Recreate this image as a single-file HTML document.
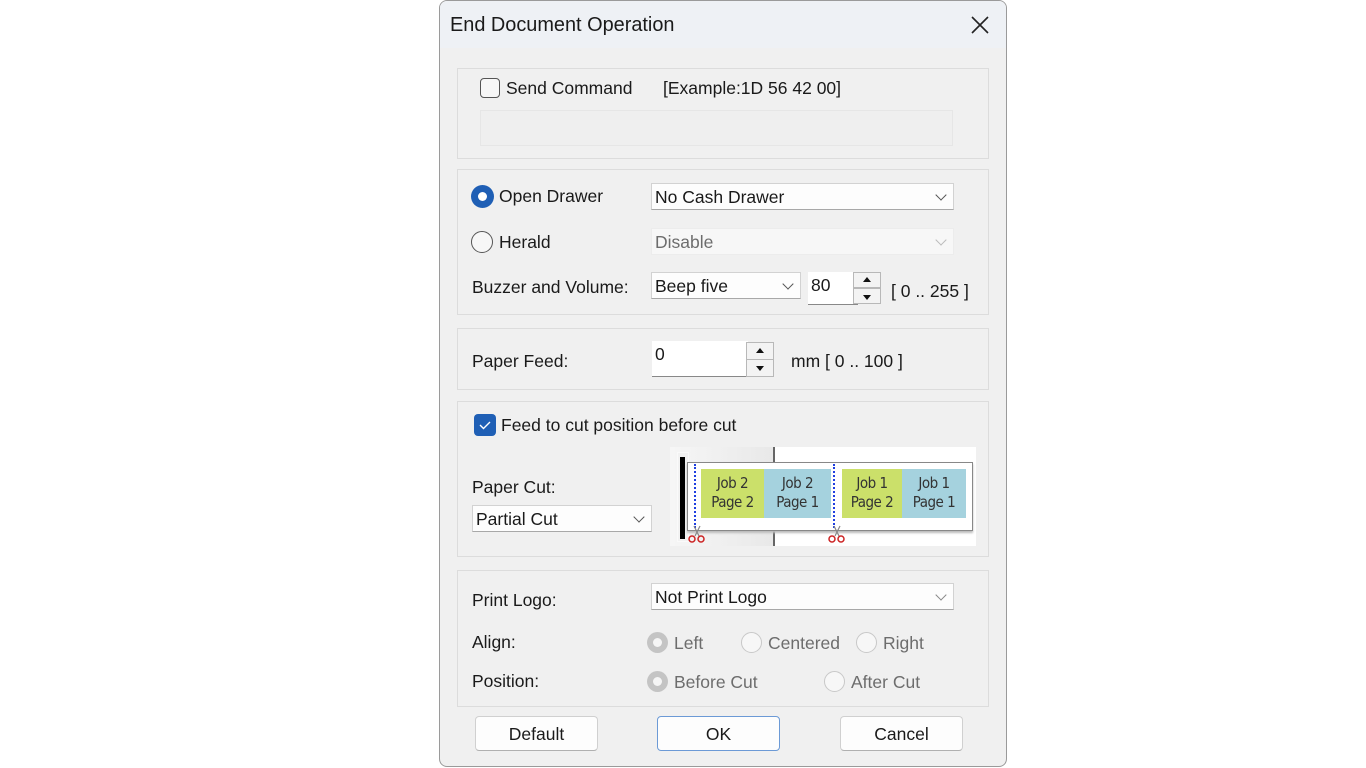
<!DOCTYPE html>
<html><head><meta charset="utf-8"><style>
*{box-sizing:border-box;margin:0;padding:0}
body{width:1366px;height:768px;background:#fff;position:relative;font-family:"Liberation Sans",Arial,sans-serif;font-size:17.5px;color:#1a1a1a;overflow:hidden}
.a{position:absolute}
.dlg{left:439px;top:0;width:568px;height:767px;background:#f0f0f0;border:1px solid #9a9a9a;border-radius:8px;overflow:hidden}
.title{left:0;top:0;width:566px;height:47px;background:#eef1f5}
.grp{position:absolute;border:1px solid #dcdcdc;background:#f0f0f0}
.cb{position:absolute;width:20px;height:20px;border:1px solid #555;border-radius:4px;background:#f7f7f7}
.rad{position:absolute;width:22px;height:22px;border-radius:50%;border:1px solid #555;background:#f7f7f7}
.sel{position:absolute;background:#fdfdfd;border:1px solid #d2d2d2;border-bottom-color:#a8a8a8;height:27px;padding:3px 0 0 3px}
.chev{position:absolute;right:8px;top:7px;width:8px;height:8px;border-right:1px solid #555;border-bottom:1px solid #555;transform:rotate(45deg)}
.spin{position:absolute;background:#fff;border-bottom:1px solid #888;padding:3px 0 0 3px}
.sb{position:absolute;width:28px;border:1px solid #b8b8b8;background:#f3f3f3}
.btn{position:absolute;height:35px;width:123px;background:#fdfdfd;border:1px solid #d0d0d0;border-bottom-color:#b0b0b0;border-radius:4px;text-align:center;line-height:34px}
.dis{color:#6d6d6d}
.drad{position:absolute;width:21px;height:21px;border-radius:50%;border:1px solid #c8c8c8;background:#f7f7f7}
.dradon{position:absolute;width:21px;height:21px;border-radius:50%;background:#c4c4c4}
.dradon:after{content:"";position:absolute;left:6px;top:6px;width:9px;height:9px;border-radius:50%;background:#f5f5f5}
.cell{position:absolute;top:469px;height:49px;font-family:"DejaVu Sans Condensed","Liberation Sans Narrow",sans-serif;font-size:15px;line-height:19px;color:#333;text-align:center;padding-top:5px;letter-spacing:-0.5px}
</style></head><body>
<div class="a dlg">
 <div class="a title"></div>
 <div class="a" style="left:10px;top:13px;font-size:19.9px;color:#1a1a1a">End Document Operation</div>
 <svg class="a" style="left:530px;top:14px" width="20" height="20"><path d="M2 2L18 18M18 2L2 18" stroke="#222" stroke-width="1.6"/></svg>
</div>

<div class="grp" style="left:457px;top:68px;width:532px;height:91px"></div>
<div class="cb" style="left:480px;top:78px"></div>
<div class="a" style="left:506px;top:78px">Send Command</div>
<div class="a" style="left:663px;top:78px">[Example:1D 56 42 00]</div>
<div class="a" style="left:480px;top:110px;width:473px;height:36px;border:1px solid #e6e6e6;background:#efefef"></div>

<div class="grp" style="left:457px;top:169px;width:532px;height:146px"></div>
<div class="a" style="left:471px;top:185px;width:23px;height:23px;border-radius:50%;background:#1f5fb5"></div>
<div class="a" style="left:478px;top:192px;width:9px;height:9px;border-radius:50%;background:#fff"></div>
<div class="a" style="left:499px;top:186px">Open Drawer</div>
<div class="sel" style="left:651px;top:183px;width:303px">No Cash Drawer<div class="chev"></div></div>
<div class="rad" style="left:471px;top:231px"></div>
<div class="a" style="left:499px;top:232px">Herald</div>
<div class="sel dis" style="left:651px;top:228px;width:303px;background:#f7f7f7;border-color:#ececec">Disable<div class="chev" style="border-color:#bbb"></div></div>
<div class="a" style="left:472px;top:277px">Buzzer and Volume:</div>
<div class="sel" style="left:651px;top:272px;width:150px">Beep five<div class="chev"></div></div>
<div class="spin" style="left:808px;top:272px;width:50px;height:33px">80</div>
<div class="sb" style="left:853px;top:272px;height:16px"></div>
<div class="sb" style="left:853px;top:288px;height:16px"></div>
<svg class="a" style="left:853px;top:272px" width="28" height="33"><path d="M10 10L14 5L18 10Z M10 23L18 23L14 28Z" fill="#111"/></svg>
<div class="a" style="left:891px;top:281px">[ 0 .. 255 ]</div>

<div class="grp" style="left:457px;top:328px;width:532px;height:62px"></div>
<div class="a" style="left:472px;top:351px">Paper Feed:</div>
<div class="spin" style="left:652px;top:341px;width:96px;height:36px">0</div>
<div class="sb" style="left:746px;top:342px;height:18px"></div>
<div class="sb" style="left:746px;top:359px;height:18px"></div>
<svg class="a" style="left:746px;top:342px" width="28" height="36"><path d="M10 11L14 6L18 11Z M10 24L18 24L14 29Z" fill="#111"/></svg>
<div class="a" style="left:791px;top:351px">mm [ 0 .. 100 ]</div>

<div class="grp" style="left:457px;top:401px;width:532px;height:156px"></div>
<div class="a" style="left:474px;top:414px;width:22px;height:22px;border-radius:4px;background:#1f5fb5"></div>
<svg class="a" style="left:474px;top:414px" width="22" height="22"><path d="M6 11L9.5 14.5L16 8" stroke="#fff" stroke-width="1.4" fill="none"/></svg>
<div class="a" style="left:501px;top:415px">Feed to cut position before cut</div>
<div class="a" style="left:472px;top:477px">Paper Cut:</div>
<div class="sel" style="left:472px;top:505px;width:180px">Partial Cut<div class="chev"></div></div>

<div class="a" style="left:670px;top:447px;width:306px;height:99px;background:#fff"></div>
<div class="a" style="left:670px;top:447px;width:104px;height:99px;background:linear-gradient(90deg,#f6f6f6,#eeeeee 60%,#e8e8e8)"></div>
<div class="a" style="left:677px;top:452px;width:12px;height:90px;border:1px solid #fafafa;background:#f2f2f2"></div>
<div class="a" style="left:773px;top:447px;width:2px;height:99px;background:#666"></div>
<div class="a" style="left:687px;top:462px;width:286px;height:69px;background:#fff;border:1px solid #888;box-shadow:0 2px 2px #bbb"></div>
<div class="a" style="left:680px;top:457px;width:5px;height:82px;background:#000"></div>
<div class="cell" style="left:701px;width:63px;background:#cbe06a">Job 2<br>Page 2</div>
<div class="cell" style="left:764px;width:67px;background:#a5d2de">Job 2<br>Page 1</div>
<div class="cell" style="left:842px;width:60px;background:#cbe06a">Job 1<br>Page 2</div>
<div class="cell" style="left:902px;width:64px;background:#a5d2de">Job 1<br>Page 1</div>
<div class="a" style="left:694px;top:464px;width:0;height:64px;border-left:2px dotted #1f3fe0"></div>
<div class="a" style="left:833px;top:464px;width:0;height:64px;border-left:2px dotted #1f3fe0"></div>
<svg class="a" style="left:686px;top:524px" width="22" height="22"><path d="M9 12L14 2M13 12L8 2" stroke="#888" stroke-width="1.2"/><circle cx="6" cy="15" r="3" stroke="#c22" fill="none" stroke-width="1.5"/><circle cx="15" cy="15" r="3" stroke="#c22" fill="none" stroke-width="1.5"/></svg>
<svg class="a" style="left:826px;top:524px" width="22" height="22"><path d="M9 12L14 2M13 12L8 2" stroke="#888" stroke-width="1.2"/><circle cx="6" cy="15" r="3" stroke="#c22" fill="none" stroke-width="1.5"/><circle cx="15" cy="15" r="3" stroke="#c22" fill="none" stroke-width="1.5"/></svg>

<div class="grp" style="left:457px;top:570px;width:532px;height:137px"></div>
<div class="a" style="left:472px;top:590px">Print Logo:</div>
<div class="sel" style="left:651px;top:583px;width:303px">Not Print Logo<div class="chev" style="border-color:#888"></div></div>
<div class="a" style="left:472px;top:632px">Align:</div>
<div class="dradon" style="left:647px;top:632px"></div>
<div class="a dis" style="left:674px;top:633px">Left</div>
<div class="drad" style="left:741px;top:632px"></div>
<div class="a dis" style="left:768px;top:633px">Centered</div>
<div class="drad" style="left:856px;top:632px"></div>
<div class="a dis" style="left:883px;top:633px">Right</div>
<div class="a" style="left:472px;top:671px">Position:</div>
<div class="dradon" style="left:647px;top:671px"></div>
<div class="a dis" style="left:674px;top:672px">Before Cut</div>
<div class="drad" style="left:824px;top:671px"></div>
<div class="a dis" style="left:851px;top:672px">After Cut</div>

<div class="btn" style="left:475px;top:716px">Default</div>
<div class="btn" style="left:657px;top:716px;border-color:#6c9ad6">OK</div>
<div class="btn" style="left:840px;top:716px">Cancel</div>
</body></html>
